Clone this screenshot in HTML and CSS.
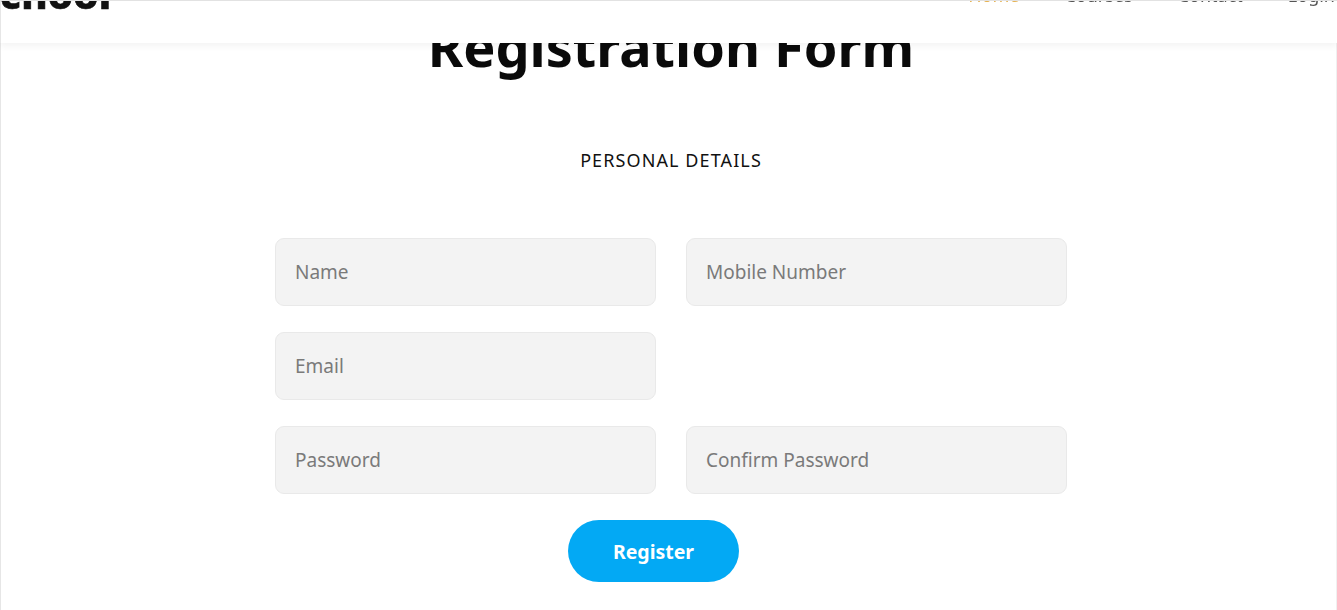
FILE: index.html
```html
<!DOCTYPE html>
<html lang="en">
<head>
<meta charset="utf-8">
<title>Registration Form</title>
<link rel="stylesheet" href="styles.css">
</head>
<body>
<header class="site-header">
  <div class="header-inner">
    <div class="logo">School</div>
    <nav class="nav">
      <a class="nav-link active" href="#">Home</a>
      <a class="nav-link" href="#">Courses</a>
      <a class="nav-link" href="#">Contact</a>
      <a class="nav-link" href="#">Login</a>
    </nav>
  </div>
</header>
<main class="page">
  <h1 class="title">Registration Form</h1>
  <h2 class="subtitle">PERSONAL DETAILS</h2>
  <form class="form">
    <div class="grid">
      <input class="field" type="text" placeholder="Name">
      <input class="field" type="tel" placeholder="Mobile Number">
      <input class="field" type="email" placeholder="Email">
      <div class="empty"></div>
      <input class="field" type="password" placeholder="Password">
      <input class="field" type="password" placeholder="Confirm Password">
    </div>
    <div class="actions">
      <button class="btn" type="button">Register</button>
    </div>
  </form>
</main>
</body>
</html>
```

FILE: styles.css
```css
* { box-sizing: border-box; }
html, body { margin: 0; padding: 0; background: #fff; }
body {
  font-family: "Noto Sans", "Open Sans", sans-serif;
  color: #111;
  border-left: 1px solid #e6e6e6;
  border-right: 1px solid #f0f0f0;
  height: 610px;
  overflow: hidden;
}
.site-header {
  position: fixed;
  top: 0; left: 0; right: 0;
  height: 43px;
  background: #fff;
  border-top: 1px solid #e2e2e2;
  border-left: 1px solid #e6e6e6;
  box-shadow: 0 3px 7px rgba(0,0,0,0.05);
  overflow: hidden;
  z-index: 10;
}
.header-inner {
  display: flex;
  align-items: flex-start;
  justify-content: space-between;
  height: 40px;
}
.logo {
  font-size: 40px;
  font-weight: 800;
  line-height: 40px;
  margin-top: -27px;
  margin-left: -24px;
  color: #111;
  letter-spacing: 0.3px;
  -webkit-text-stroke: 0.6px #111;
}
.nav {
  display: flex;
  gap: 45px;
  margin-top: -16px;
  margin-right: 2px;
}
.nav-link {
  font-size: 18px;
  line-height: 20px;
  color: #555;
  text-decoration: none;
}
.nav-link.active { color: #e6b354; }
.page {
  padding-top: 14px;
  padding-left: 5px;
  display: flex;
  flex-direction: column;
  align-items: center;
}
.title {
  margin: 0;
  font-size: 54px;
  line-height: 64px;
  font-weight: 700;
  color: #0a0a0a;
}
.subtitle {
  margin: 70px 0 0;
  font-size: 18px;
  line-height: 24px;
  font-weight: 400;
  letter-spacing: 1.1px;
  color: #111;
}
.form {
  margin-top: 66px;
  width: 792px;
}
.grid {
  display: grid;
  grid-template-columns: 381px 381px;
  column-gap: 30px;
  row-gap: 26px;
}
.field {
  height: 68px;
  width: 100%;
  border: 1px solid #e9e9e9;
  border-radius: 9px;
  background: #f3f3f3;
  padding: 0 19px;
  font-family: "Noto Sans", "Open Sans", sans-serif;
  font-size: 19px;
  color: #333;
  outline: none;
}
.field::placeholder { color: #7a7a7a; }
.actions {
  display: flex;
  margin-top: 26px;
  padding-left: 293px;
}
.btn {
  width: 171px;
  height: 62px;
  border: none;
  border-radius: 31px;
  background: #03a9f4;
  color: #fff;
  font-family: "Noto Sans", "Open Sans", sans-serif;
  font-size: 19.5px;
  font-weight: 700;
  cursor: pointer;
}
```
